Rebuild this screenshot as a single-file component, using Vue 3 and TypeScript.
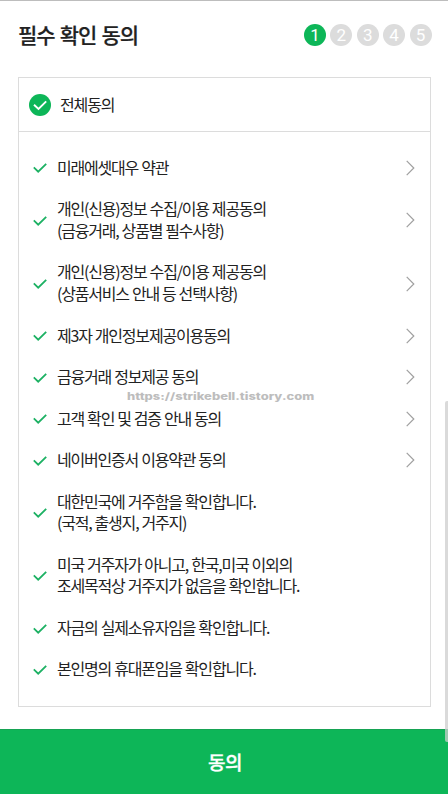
<script setup lang="ts">
interface Term {
  lines: string[]
  detail: boolean
}

const steps: number[] = [1, 2, 3, 4, 5]
const current = 1

const terms: Term[] = [
  { lines: ['미래에셋대우 약관'], detail: true },
  { lines: ['개인(신용)정보 수집/이용 제공동의', '(금융거래, 상품별 필수사항)'], detail: true },
  { lines: ['개인(신용)정보 수집/이용 제공동의', '(상품서비스 안내 등 선택사항)'], detail: true },
  { lines: ['제3자 개인정보제공이용동의'], detail: true },
  { lines: ['금융거래 정보제공 동의'], detail: true },
  { lines: ['고객 확인 및 검증 안내 동의'], detail: true },
  { lines: ['네이버인증서 이용약관 동의'], detail: true },
  { lines: ['대한민국에 거주함을 확인합니다.', '(국적, 출생지, 거주지)'], detail: false },
  { lines: ['미국 거주자가 아니고, 한국,미국 이외의', '조세목적상 거주지가 없음을 확인합니다.'], detail: false },
  { lines: ['자금의 실제소유자임을 확인합니다.'], detail: false },
  { lines: ['본인명의 휴대폰임을 확인합니다.'], detail: false },
]
</script>

<template>
  <div class="page">
    <header class="header">
      <h1 class="title">필수 확인 동의</h1>
      <ol class="steps">
        <li v-for="n in steps" :key="n" class="step" :class="{ active: n === current }">{{ n }}</li>
      </ol>
    </header>

    <main class="card">
      <div class="all">
        <svg class="all-icon" viewBox="0 0 22 22">
          <circle cx="11" cy="11" r="11" />
          <path d="M5 10.8 9.5 15 17.2 7.4" />
        </svg>
        <span class="all-label">전체동의</span>
      </div>
      <ul class="terms">
        <li v-for="(term, i) in terms" :key="i" class="term">
          <svg class="check" viewBox="0 0 14 10">
            <path d="M0.8 4.4 5.2 8.7 13.2 0.8" />
          </svg>
          <div class="text">
            <div v-for="line in term.lines" :key="line" class="line">{{ line }}</div>
          </div>
          <svg v-if="term.detail" class="chevron" viewBox="0 0 9 16">
            <path d="M0.7 0.9 7.8 8 0.7 15.1" />
          </svg>
        </li>
      </ul>
    </main>

    <button class="submit" type="button">동의</button>

    <div class="watermark">https://strikebell.tistory.com</div>
    <div class="scrollbar"></div>
  </div>
</template>

<style>
body {
  margin: 0;
  background: #fff;
}
</style>

<style scoped>
.page {
  position: relative;
  box-sizing: border-box;
  width: 448px;
  height: 794px;
  overflow: hidden;
  display: flex;
  flex-direction: column;
  border-top: 1px solid #bdbdbd;
  background: #fff;
  color: #222;
  font-family: "Noto Sans CJK KR", "Noto Sans", sans-serif;
}

.header {
  flex: none;
  height: 76px;
  padding: 0 16.5px 7.4px 18px;
  box-sizing: border-box;
  display: flex;
  align-items: center;
  justify-content: space-between;
}

.title {
  margin: -2.6px 0 0;
  font-size: 21px;
  line-height: 30px;
  font-weight: 500;
  letter-spacing: -0.95px;
  word-spacing: 1.2px;
  white-space: nowrap;
  -webkit-text-stroke: 0.2px #222;
}

.steps {
  display: flex;
  gap: 4.4px;
  margin: 0;
  padding: 0;
  list-style: none;
}

.step {
  width: 22px;
  height: 22px;
  border-radius: 50%;
  background: #dcdcdc;
  color: #fff;
  font: 17px/22px Roboto, sans-serif;
  text-align: center;
}

.step.active {
  background: #0db658;
}

.card {
  flex: none;
  box-sizing: border-box;
  width: 413px;
  height: 630px;
  margin-left: 18px;
  border: 1px solid #dcdcdc;
}

.all {
  height: 54px;
  box-sizing: border-box;
  display: flex;
  align-items: center;
  gap: 9px;
  padding-left: 10px;
  border-bottom: 1px solid #dcdcdc;
}

.all-icon {
  width: 22px;
  height: 22px;
}

.all-icon circle {
  fill: #0db658;
}

.all-icon path {
  fill: none;
  stroke: #fff;
  stroke-width: 1.9;
}

.all-label {
  margin-top: -2px;
  font-size: 16px;
  line-height: 22px;
  letter-spacing: -1.1px;
}

.terms {
  display: flex;
  flex-direction: column;
  gap: 19.8px;
  margin: 0;
  padding: 24.6px 15.5px 0 14px;
  list-style: none;
}

.term {
  display: flex;
  align-items: center;
}

.check {
  width: 14px;
  height: 10px;
  margin-top: 2px;
  flex: none;
}

.check path {
  fill: none;
  stroke: #1cb163;
  stroke-width: 1.8;
}

.text {
  flex: 1;
  margin-left: 10px;
}

.line {
  font-size: 16px;
  line-height: 21.7px;
  letter-spacing: -1.2px;
  word-spacing: 0.7px;
  white-space: nowrap;
}

.chevron {
  width: 9px;
  height: 16px;
  margin-top: 1px;
  flex: none;
}

.chevron path {
  fill: none;
  stroke: #a0a0a0;
  stroke-width: 1.2;
}

.submit {
  flex: none;
  height: 65px;
  margin: 22px 0 0;
  padding: 0 0 0 2px;
  border: 0;
  border-top: 1px solid #16a354;
  background: #0db658;
  color: #fff;
  font: 500 19px/28px "Noto Sans CJK KR", sans-serif;
  letter-spacing: -0.5px;
  -webkit-text-stroke: 0.3px #fff;
}

.watermark {
  position: absolute;
  left: 127px;
  top: 388px;
  color: #bdbdbd;
  font: 800 10px/14px Inter, sans-serif;
  white-space: nowrap;
  transform: scaleX(1.295);
  transform-origin: 0 50%;
}

.scrollbar {
  position: absolute;
  left: 445px;
  top: 400px;
  width: 5px;
  height: 341px;
  border-radius: 2px;
  background: rgba(205, 205, 205, 0.75);
}
</style>
